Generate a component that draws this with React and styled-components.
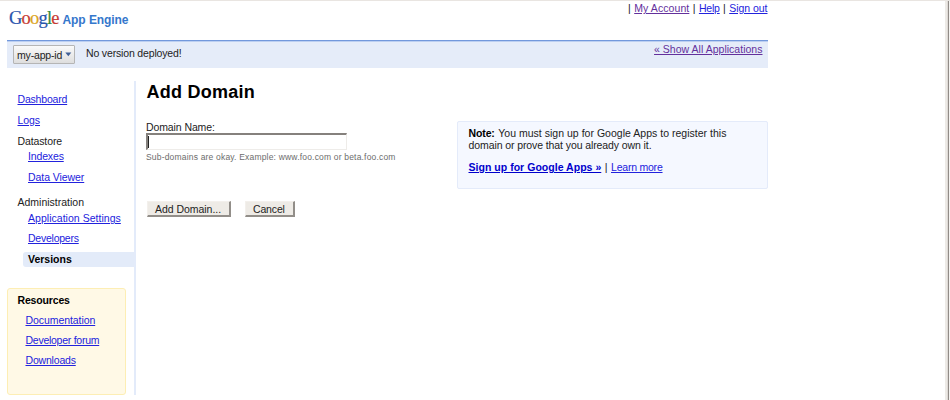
import React from 'react';
import styled, { createGlobalStyle } from 'styled-components';

const Global = createGlobalStyle`
  * { box-sizing: border-box; }
  body { margin: 0; background: #fff; overflow: hidden; }
`;

const Page = styled.div`
  display: flex;
  justify-content: space-between;
  width: 950px;
  height: 400px;
  border-top: 1px solid #e9e5e1;
  font: 10.5px/12px "Liberation Sans", Arial, sans-serif;
  color: #222;
`;
const Frame = styled.div`
  width: 761px;
  margin-left: 7px;
`;
const WindowEdge = styled.div`
  width: 5px;
  border-left: 2px solid #edeae6;
  border-right: 1px solid #f5f3f0;
  background: linear-gradient(to right, #dedad6 1px, #918c88 1px);
`;
const Text = styled.span`
  display: inline-block;
  white-space: nowrap;
  letter-spacing: ${p => p.$ls || 0}px;
  font-weight: ${p => (p.$bold ? 700 : 400)};
  color: ${p => (p.$bold ? '#000' : 'inherit')};
`;
const Link = styled.a`
  display: inline-block;
  white-space: nowrap;
  letter-spacing: ${p => p.$ls || 0}px;
  font-weight: ${p => (p.$bold ? 700 : 400)};
  color: ${p => (p.$visited ? '#63309c' : p.$bold ? '#0000cc' : '#2222dd')};
  text-decoration: underline;
  text-decoration-thickness: 1px;
  text-underline-offset: 1px;
`;

const Header = styled.header`
  display: flex;
  justify-content: space-between;
  height: 39px;
`;
const Brand = styled.div`
  display: flex;
  align-items: baseline;
  height: 30px;
  padding: 6px 0 0 2px;
`;
const Wordmark = styled.div`
  width: 53.5px;
  font: 18.5px/22px "Liberation Serif", serif;
  letter-spacing: -0.8px;
  -webkit-text-stroke: 0.2px currentColor;
`;
const Letter = styled.span`color: ${p => p.$c};`;
const Product = styled.div`
  font-size: 12px;
  font-weight: 700;
  letter-spacing: -0.07px;
  color: #3577cc;
`;
const Account = styled.nav`
  display: flex;
  gap: 3.4px;
  padding: 1px 0.5px 0 0;
`;
const AppBar = styled.div`
  display: flex;
  height: 28px;
  border-top: 1px solid #7298dc;
  box-shadow: inset 0 1px #bccff1;
  background: #e5ecf9;
`;
const Picker = styled.button`
  display: flex;
  align-items: center;
  justify-content: space-between;
  width: 62px;
  height: 19px;
  margin: 4px 11px 0 6px;
  padding: 0 2px 0 3px;
  border: 1px solid #b5b5b5;
  border-radius: 1px;
  background: linear-gradient(#fafafa, #dedede);
  font: inherit;
  color: inherit;
`;
const Status = styled.div`
  flex: 1;
  padding-top: 6px;
`;
const ShowAll = styled.div`padding: 2px 5.5px 0 0;`;

const Body = styled.div`
  display: flex;
  height: 314px;
  margin-top: 13px;
`;
const Sidebar = styled.aside`
  width: 129px;
  border-right: 2px solid #e3ebfa;
`;
const Menu = styled.nav`
  height: 207px;
  padding-top: 12px;
`;
const Item = styled.div`
  height: ${p => p.$h || 21}px;
  padding-left: ${p => (p.$sub ? 21 : 10.5)}px;
`;
const Current = styled.div`
  height: 15px;
  margin: -1px 0 0 16px;
  padding: 1px 0 0 5px;
  border-radius: 3px 0 0 3px;
  background: #e3ebf9;
`;
const Resources = styled.section`
  width: 119px;
  height: 107px;
  padding: 5px 0 0 9.5px;
  border: 1px solid #fdeeb4;
  border-radius: 3px;
  background: #fff9e6;
`;
const ResourceList = styled.div`
  display: flex;
  flex-direction: column;
  align-items: flex-start;
  gap: 8px;
  padding: 8px 0 0 8px;
`;

const Main = styled.main`
  flex: 1;
  padding-left: 10px;
`;
const Title = styled.h1`
  height: 40px;
  margin: 0;
  padding: 1px 0 0 0.5px;
  font-size: 18px;
  line-height: 21px;
  letter-spacing: 0.25px;
  color: #000;
`;
const Columns = styled.div`
  display: flex;
  justify-content: space-between;
`;
const Field = styled.label`
  display: block;
  width: 260px;
`;
const Input = styled.input`
  display: block;
  width: 201px;
  height: 17px;
  margin: 0 0 2px 0;
  padding: 0 2px;
  border: 1px solid #eeece9;
  border-top: 2px solid #85817d;
  border-left: 2px solid #85817d;
  outline: none;
  background: linear-gradient(#222, #222) 0 1px / 1px 12px no-repeat #fff;
`;
const Hint = styled.div`
  font-size: 8.5px;
  line-height: 10px;
  letter-spacing: 0.185px;
  white-space: nowrap;
  color: #6c6c6c;
`;
const Note = styled.section`
  width: 311px;
  height: 68px;
  padding: 5px 0 0 10.5px;
  border: 1px solid #e4ebfa;
  border-radius: 2px;
  background: #f5f8ff;
`;
const NoteLine = styled.p`
  display: flex;
  gap: 3.5px;
  margin: 0 0 ${p => p.$after || 0}px;
`;
const Actions = styled.div`
  display: flex;
  gap: 14px;
  margin: 12px 0 0 1px;
`;
const Button = styled.button`
  width: ${p => p.$w}px;
  height: 16px;
  padding: 1px 0 0 7px;
  border: 1px solid #f3f0ec;
  border-right: 2px solid #928e89;
  border-bottom: 2px solid #928e89;
  background: #eeebe6;
  font: inherit;
  line-height: 12px;
  text-align: left;
  color: inherit;
`;

const LOGO = [['G', '#2854ad'], ['o', '#c73a32'], ['o', '#dca51e'], ['g', '#2854ad'], ['l', '#318a42'], ['e', '#c73a32']];

export default function App() {
  return (
    <>
      <Global />
      <Page>
        <Frame>
          <Header>
            <Brand>
              <Wordmark>{LOGO.map(([l, c], i) => <Letter key={i} $c={c}>{l}</Letter>)}</Wordmark>
              <Product>App Engine</Product>
            </Brand>
            <Account>
              <span>|</span><Link href="#" $visited $ls={0.09}>My Account</Link>
              <span>|</span><Link href="#" $ls={-0.2}>Help</Link>
              <span>|</span><Link href="#" $ls={-0.03}>Sign out</Link>
            </Account>
          </Header>
          <AppBar>
            <Picker>
              <Text $ls={-0.17}>my-app-id</Text>
              <svg width="7" height="5" viewBox="0 0 7 5"><path d="M0.3 0.5h6L3.3 4.3z" fill="#3f5f96" /></svg>
            </Picker>
            <Status><Text $ls={-0.16}>No version deployed!</Text></Status>
            <ShowAll><Link href="#" $visited $ls={0.02}>« Show All Applications</Link></ShowAll>
          </AppBar>
          <Body>
            <Sidebar>
              <Menu>
                <Item><Link href="#" $ls={-0.19}>Dashboard</Link></Item>
                <Item><Link href="#" $ls={-0.067}>Logs</Link></Item>
                <Item $h={15}><Text $ls={-0.114}>Datastore</Text></Item>
                <Item $sub><Link href="#" $ls={-0.15}>Indexes</Link></Item>
                <Item $sub $h={25}><Link href="#" $ls={-0.07}>Data Viewer</Link></Item>
                <Item $h={16}><Text>Administration</Text></Item>
                <Item $sub $h={20}><Link href="#" $ls={0.03}>Application Settings</Link></Item>
                <Item $sub><Link href="#" $ls={-0.24}>Developers</Link></Item>
                <Current><Text $bold>Versions</Text></Current>
              </Menu>
              <Resources>
                <Text $bold $ls={-0.16}>Resources</Text>
                <ResourceList>
                  <Link href="#" $ls={-0.07}>Documentation</Link>
                  <Link href="#" $ls={-0.26}>Developer forum</Link>
                  <Link href="#" $ls={-0.19}>Downloads</Link>
                </ResourceList>
              </Resources>
            </Sidebar>
            <Main>
              <Title>Add Domain</Title>
              <Columns>
                <Field>
                  <Text $ls={-0.1}>Domain Name:</Text>
                  <Input />
                  <Hint>Sub-domains are okay. Example: www.foo.com or beta.foo.com</Hint>
                </Field>
                <Note>
                  <NoteLine>
                    <Text $bold $ls={-0.12}>Note:</Text>
                    <Text $ls={0.02}>You must sign up for Google Apps to register this</Text>
                  </NoteLine>
                  <NoteLine $after={10}><Text $ls={-0.094}>domain or prove that you already own it.</Text></NoteLine>
                  <NoteLine>
                    <Link href="#" $bold $ls={0.03}>Sign up for Google Apps »</Link>
                    <span>|</span>
                    <Link href="#" $ls={-0.219}>Learn more</Link>
                  </NoteLine>
                </Note>
              </Columns>
              <Actions>
                <Button $w={84}><Text $ls={-0.04}>Add Domain...</Text></Button>
                <Button $w={50}><Text $ls={-0.15}>Cancel</Text></Button>
              </Actions>
            </Main>
          </Body>
        </Frame>
        <WindowEdge />
      </Page>
    </>
  );
}
